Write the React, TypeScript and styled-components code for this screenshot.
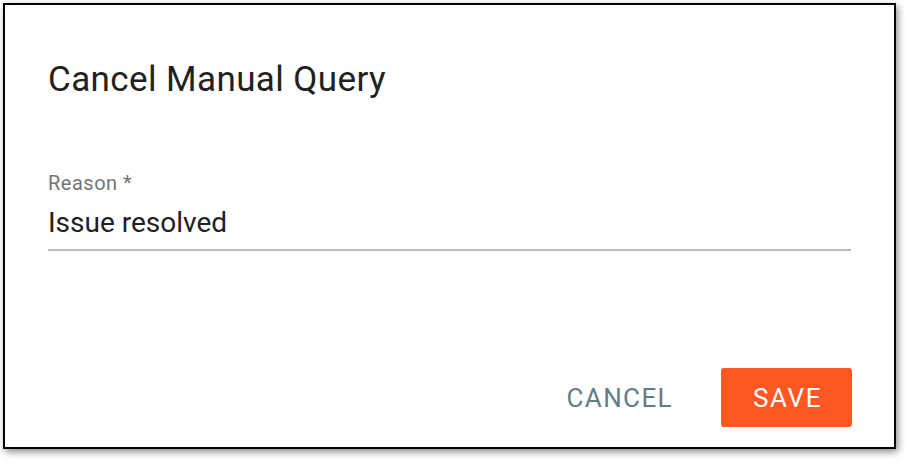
import styled, { createGlobalStyle } from "styled-components";

const GlobalStyle = createGlobalStyle`
  body {
    margin: 0;
    background: #ffffff;
    font-family: Roboto, "Liberation Sans", sans-serif;
  }
`;

const App = () => {
  return (
    <Page>
      <GlobalStyle />
      <Dialog>
        <Title>Cancel Manual Query</Title>
        <Field>
          <FieldLabel>Reason *</FieldLabel>
          <FieldValue>Issue resolved</FieldValue>
        </Field>
        <Actions>
          <TextButton>CANCEL</TextButton>
          <PrimaryButton>SAVE</PrimaryButton>
        </Actions>
      </Dialog>
    </Page>
  );
};

const Page = styled.div`
  width: 906px;
  height: 460px;
  padding: 3px 0 0 3px;
  box-sizing: border-box;
`;

const Dialog = styled.div`
  width: 893px;
  height: 446px;
  box-sizing: border-box;
  border: 2px solid #000000;
  background: #ffffff;
  box-shadow: 2px 3px 7px rgba(0, 0, 0, 0.45);
  padding: 55px 42px 0 43px;
  display: flex;
  flex-direction: column;
`;

const Title = styled.h2`
  margin: 0;
  font-size: 35px;
  font-weight: 400;
  letter-spacing: 0.4px;
  line-height: 40px;
  color: #212121;
`;

const Field = styled.div`
  margin-top: 72px;
  margin-right: 1px;
  display: flex;
  flex-direction: column;
  border-bottom: 2px solid #bdbdbd;
`;

const FieldLabel = styled.label`
  font-size: 20px;
  letter-spacing: 0.5px;
  line-height: 22px;
  color: #757575;
`;

const FieldValue = styled.div`
  margin-top: 13px;
  font-size: 28px;
  line-height: 32px;
  padding-bottom: 10px;
  color: #212121;
`;

const Actions = styled.div`
  margin-top: auto;
  margin-bottom: 20px;
  display: flex;
  justify-content: flex-end;
  align-items: center;
  gap: 22px;
`;

const TextButton = styled.button`
  height: 59px;
  padding: 0 26px;
  border: none;
  background: transparent;
  font-family: Roboto, "Liberation Sans", sans-serif;
  font-size: 26px;
  font-weight: 400;
  letter-spacing: 1.4px;
  color: #607d8b;
`;

const PrimaryButton = styled.button`
  width: 131px;
  height: 59px;
  border: none;
  border-radius: 3px;
  padding: 0 0 0 2px;
  background: #ff5722;
  color: #ffffff;
  font-family: Roboto, "Liberation Sans", sans-serif;
  font-size: 26px;
  font-weight: 400;
  letter-spacing: 1.6px;
`;

export default App;
